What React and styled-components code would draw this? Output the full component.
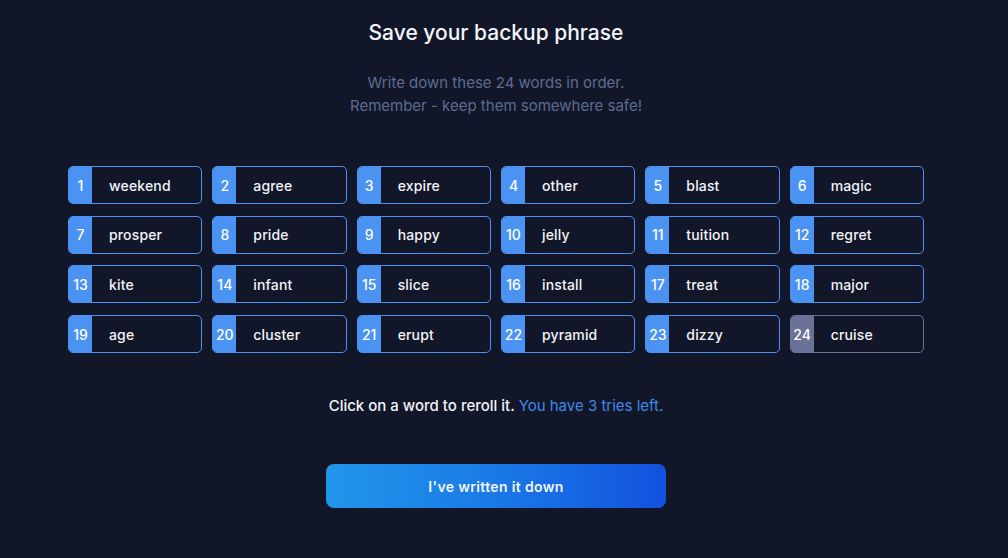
import React from "react";
import styled, { createGlobalStyle } from "styled-components";

const GlobalStyle = createGlobalStyle`
  html, body {
    margin: 0;
    padding: 0;
    background: #111729;
    font-family: Inter, "Noto Sans", sans-serif;
  }
`;

const Page = styled.div`
  width: 992px;
  height: 558px;
  display: flex;
  flex-direction: column;
  align-items: center;
  padding-top: 20px;
  box-sizing: border-box;
`;

const Title = styled.h1`
  margin: 0;
  font-size: 21px;
  line-height: 26px;
  font-weight: 500;
  color: #f3f5fa;
`;

const Subtitle = styled.p`
  margin: 25px 0 0;
  font-size: 15px;
  line-height: 23px;
  color: #5f6b90;
  text-align: center;
`;

const Grid = styled.div`
  margin-top: 49px;
  width: 856px;
  display: grid;
  grid-template-columns: repeat(6, 1fr);
  column-gap: 10px;
  row-gap: 11.7px;
`;

const Word = styled.div`
  height: 38px;
  display: flex;
  align-items: center;
  border: 1px solid ${p => (p.used ? "#6a7196" : "#4a93f3")};
  border-radius: 5px;
  overflow: hidden;
  box-sizing: border-box;
  cursor: pointer;
`;

const Num = styled.span`
  width: 23px;
  align-self: stretch;
  display: flex;
  align-items: center;
  justify-content: center;
  background: ${p => (p.used ? "#6a7196" : "#4a93f3")};
  color: #ffffff;
  font-size: 14px;
  font-weight: 500;
`;

const Label = styled.span`
  padding-left: 17px;
  color: #f1f3f8;
  font-size: 14px;
  font-weight: 500;
  letter-spacing: 0.15px;
`;

const Hint = styled.p`
  margin: 43px 0 0;
  font-size: 15px;
  line-height: 20px;
  font-weight: 500;
  color: #f1f3f8;
  span {
    color: #3f8ae8;
    font-weight: 400;
  }
`;

const Button = styled.button`
  margin-top: 48px;
  width: 340px;
  height: 44px;
  border: none;
  border-radius: 8px;
  background: linear-gradient(90deg, #2196ea 0%, #1a79e6 50%, #1252de 100%);
  color: #f1f4fb;
  font-family: inherit;
  font-size: 14px;
  font-weight: 600;
  letter-spacing: 0.35px;
  cursor: pointer;
`;

const words = [
  "weekend", "agree", "expire", "other", "blast", "magic",
  "prosper", "pride", "happy", "jelly", "tuition", "regret",
  "kite", "infant", "slice", "install", "treat", "major",
  "age", "cluster", "erupt", "pyramid", "dizzy", "cruise",
];

export default function App() {
  return (
    <>
      <GlobalStyle />
      <Page>
        <Title>Save your backup phrase</Title>
        <Subtitle>
          Write down these 24 words in order.
          <br />
          Remember - keep them somewhere safe!
        </Subtitle>
        <Grid>
          {words.map((w, i) => (
            <Word key={w} used={i === 23}>
              <Num used={i === 23}>{i + 1}</Num>
              <Label>{w}</Label>
            </Word>
          ))}
        </Grid>
        <Hint>
          Click on a word to reroll it. <span>You have 3 tries left.</span>
        </Hint>
        <Button>I've written it down</Button>
      </Page>
    </>
  );
}
